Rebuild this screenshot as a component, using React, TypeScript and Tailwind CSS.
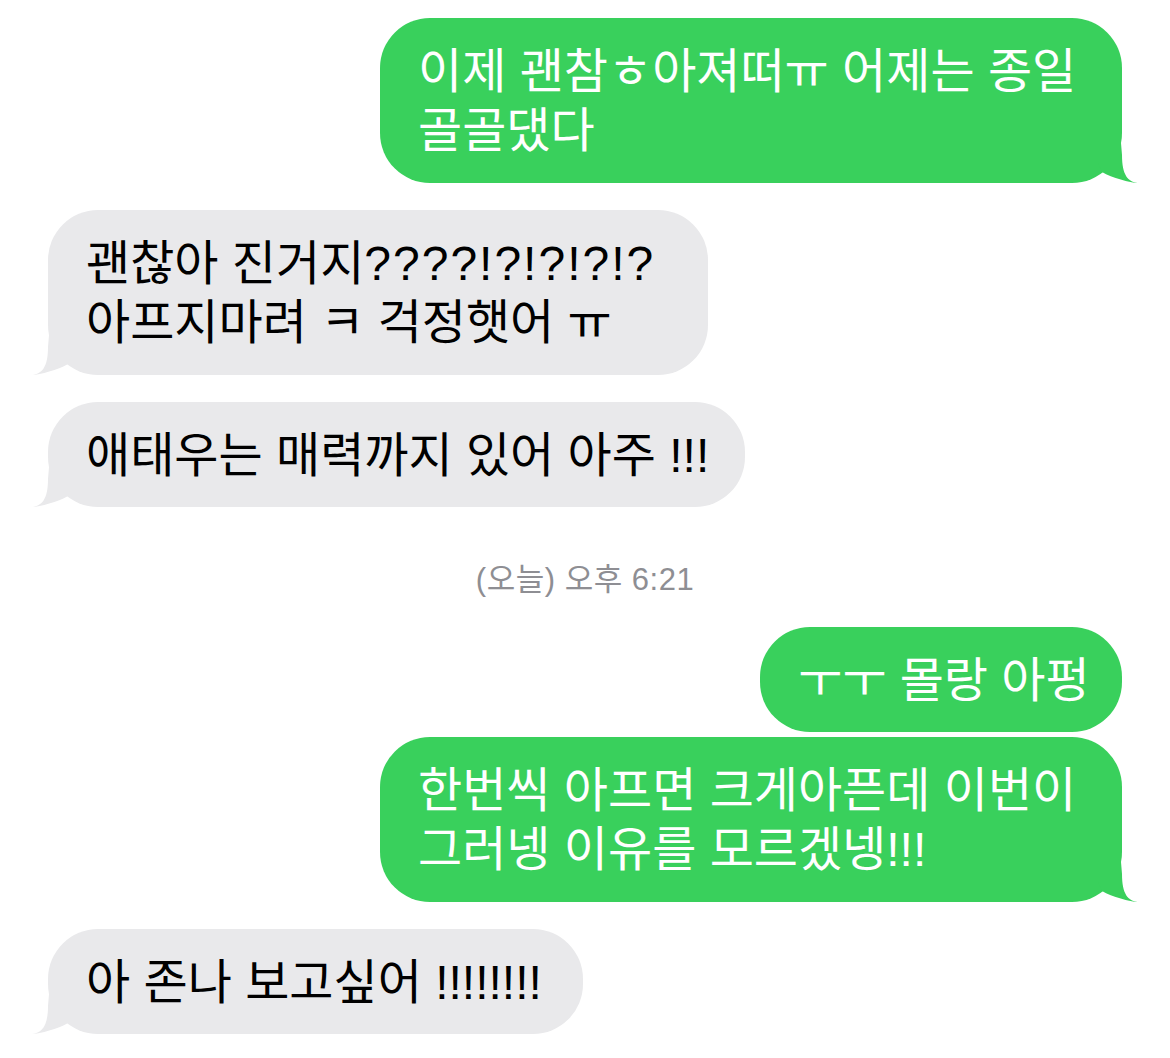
import React from "react";

type Side = "me" | "them";

const FONT = '"Liberation Sans", "Noto Sans CJK KR", sans-serif';

function Tail({ side }: { side: Side }) {
  if (side === "me") {
    return (
      <svg
        className="absolute right-[-16px] bottom-0 h-[40px] w-[40px] fill-[#39d05c]"
        viewBox="0 0 40 40"
        aria-hidden="true"
      >
        <path d="M23 0 L24 12 C24 32 30 39 40 40 C32 39.5 14 35 4 29 L0 20 L0 0 Z" />
      </svg>
    );
  }
  return (
    <svg
      className="absolute left-[-16px] bottom-0 h-[40px] w-[40px] fill-[#e9e9eb]"
      viewBox="0 0 40 40"
      aria-hidden="true"
    >
      <path d="M17 0 L16 12 C16 32 10 39 0 40 C8 39.5 26 35 36 29 L40 20 L40 0 Z" />
    </svg>
  );
}

function Bubble({
  side,
  lines,
  width,
  tail = true,
  className = "",
}: {
  side: Side;
  lines: React.ReactNode[];
  width: string;
  tail?: boolean;
  className?: string;
}) {
  const color =
    side === "me" ? "bg-[#39d05c] text-white self-end" : "bg-[#e9e9eb] text-black self-start";
  const pad = lines.length > 1 ? "pt-[24px] pb-[23px]" : "pt-[24px] pb-[22px]";
  return (
    <div className={`relative rounded-[50px] px-[38px] ${pad} ${color} ${width} ${className}`}>
      {lines.map((l, i) => (
        <div key={i} className="h-[59px] whitespace-pre text-[48px] leading-[59px]">
          {l}
        </div>
      ))}
      {tail && <Tail side={side} />}
    </div>
  );
}

export default function App() {
  return (
    <div
      className="flex min-h-[1058px] w-full flex-col bg-white px-[48px] pt-[18px] pb-[23px]"
      style={{ fontFamily: FONT }}
    >
      <Bubble side="me" width="w-[742px]" lines={["이제 괜참ㅎ아져떠ㅠ 어제는 종일", "골골댔다"]} />
      <Bubble
        side="them"
        width="w-[660px]"
        className="mt-[27px]"
        lines={[
          <>
            괜찮아 진거지<span className="tracking-[2px]">????!?!?!?!?</span>
          </>,
          "아프지마려 ㅋ 걱정햇어 ㅠ",
        ]}
      />
      <Bubble side="them" width="w-[697px]" className="mt-[27px]" lines={["애태우는 매력까지 있어 아주 !!!"]} />

      <div className="mt-[56px] text-center text-[31px] leading-[34px] tracking-[0.5px] text-[#8e8e93]">
        (오늘) 오후 6:21
      </div>

      <Bubble side="me" width="w-[362px]" tail={false} className="mt-[30px]" lines={["ㅜㅜ 몰랑 아펑"]} />
      <Bubble
        side="me"
        width="w-[742px]"
        className="mt-[5px]"
        lines={["한번씩 아프면 크게아픈데 이번이", "그러넹 이유를 모르겠넹!!!"]}
      />
      <Bubble side="them" width="w-[535px]" className="mt-[27px]" lines={["아 존나 보고싶어 !!!!!!!!"]} />
    </div>
  );
}
